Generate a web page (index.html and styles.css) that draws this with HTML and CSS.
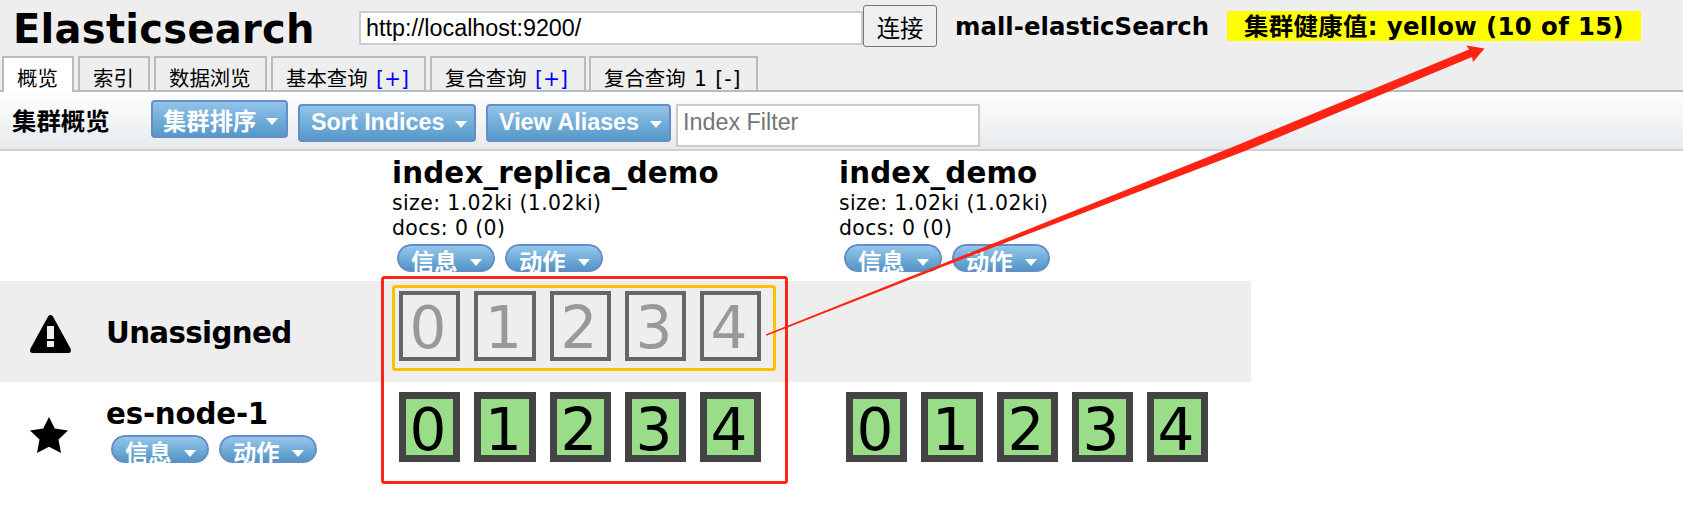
FILE: index.html
```html
<!DOCTYPE html>
<html lang="zh-CN">
<head>
<meta charset="utf-8">
<title>Elasticsearch</title>
<link rel="stylesheet" href="styles.css">
</head>
<body>
<header class="header">
  <div class="topline">
    <h1 class="brand">Elasticsearch</h1>
    <input class="url" type="text" value="http://localhost:9200/">
    <button class="connect">连接</button>
    <span class="cluster">mall-elasticSearch</span>
    <span class="health">集群健康值: yellow (10 of 15)</span>
  </div>
  <nav class="tabs">
    <div class="tab tab-short active">概览</div>
    <div class="tab tab-short">索引</div>
    <div class="tab tab-data">数据浏览</div>
    <div class="tab tab-query">基本查询 <a class="more">[+]</a></div>
    <div class="tab tab-multi">复合查询 <a class="more">[+]</a></div>
    <div class="tab tab-open">复合查询 <a class="page">1 [-]</a></div>
  </nav>
</header>
<section class="toolbar">
  <h2 class="toolbar-title">集群概览</h2>
  <button class="menu menu-cluster">集群排序<i class="caret"></i></button>
  <button class="menu menu-sort">Sort Indices<i class="caret"></i></button>
  <button class="menu menu-alias">View Aliases<i class="caret"></i></button>
  <input class="filter" type="text" placeholder="Index Filter">
</section>
<main class="grid">
  <div class="row heads">
    <div class="node"></div>
    <div class="col">
      <h3 class="name index-long">index_replica_demo</h3>
      <p class="stat">size: 1.02ki (1.02ki)</p>
      <p class="stat">docs: 0 (0)</p>
      <div class="pills"><button class="pill">信息<i class="caret"></i></button><button class="pill">动作<i class="caret"></i></button></div>
    </div>
    <div class="col">
      <h3 class="name index-long">index_demo</h3>
      <p class="stat">size: 1.02ki (1.02ki)</p>
      <p class="stat">docs: 0 (0)</p>
      <div class="pills"><button class="pill">信息<i class="caret"></i></button><button class="pill">动作<i class="caret"></i></button></div>
    </div>
  </div>
  <div class="row unassigned">
    <div class="node">
      <svg class="icon warn" viewBox="0 0 41 38"><path fill-rule="evenodd" d="M18.2 1.2Q20.5-1.2 22.8 1.2L40.5 33.5Q42 38 38.5 38H2.5Q-1 38 .5 33.5ZM17 11V24H24V11ZM17 26V32H24V26Z"/></svg>
      <h3 class="name">Unassigned</h3>
    </div>
    <div class="col shards">
      <b class="shard">0</b><b class="shard wide">1</b><b class="shard">2</b><b class="shard">3</b><b class="shard">4</b>
    </div>
  </div>
  <div class="row assigned">
    <div class="node">
      <svg class="icon star" viewBox="0 0 38 36"><path d="M19 0L24.8 11.4L38 13.5L28.5 22.5L31 36L19 29.8L7 36L9.5 22.5L0 13.5L13.2 11.4Z"/></svg>
      <div>
        <h3 class="name">es-node-1</h3>
        <div class="pills"><button class="pill">信息<i class="caret"></i></button><button class="pill">动作<i class="caret"></i></button></div>
      </div>
    </div>
    <div class="col shards">
      <b class="shard">0</b><b class="shard wide">1</b><b class="shard">2</b><b class="shard">3</b><b class="shard">4</b>
    </div>
    <div class="col shards">
      <b class="shard">0</b><b class="shard wide">1</b><b class="shard">2</b><b class="shard">3</b><b class="shard">4</b>
    </div>
  </div>
</main>
<svg class="notes" viewBox="0 0 1683 506">
  <rect class="note-red" x="382.5" y="277.5" width="404" height="205" rx="2"/>
  <rect class="note-gold" x="393.5" y="286.5" width="381" height="83" rx="2"/>
  <path class="arrow" d="M766 334.3L942 264L1240 144L1469 49.5L1466.5 45.5L1484.5 48.5L1473 62L1472 57L1245 151L942 267L766.5 335.8Z"/>
</svg>
</body>
</html>
```
FILE: styles.css
```css
* { box-sizing: border-box; }
body {
  margin: 0;
  height: 506px;
  overflow: hidden;
  position: relative;
  background: #fff;
  color: #000;
  font-family: "DejaVu Sans", "Noto Sans CJK SC", sans-serif;
}
h1, h2, h3, p { margin: 0; }
button, input { font-family: "Liberation Sans", "Noto Sans CJK SC", sans-serif; font-size: 23.33px; }
button { padding: 0; }

.header { height: 92px; background: #eee; border-bottom: 2px solid #bbb; }
.topline { display: flex; align-items: flex-start; height: 56px; padding-left: 13px; }
.brand { width: 346px; padding-top: 4px; font-size: 40px; line-height: 50px; letter-spacing: .28px; }
.url { width: 504px; height: 34px; margin-top: 11px; padding: 0 5px; border: 2px solid #ccc; background: #fff; }
.connect { width: 74px; height: 42px; margin-top: 5px; padding-top: 2px; border: 1px solid #767676; border-radius: 3px; background: #efefef; color: #000; }
.cluster, .health { font-size: 24.4px; font-weight: bold; line-height: 32px; margin-top: 11px; white-space: nowrap; }
.cluster { width: 272px; margin-left: 18px; letter-spacing: .04px; }
.health { width: 414px; height: 30px; padding-left: 17px; letter-spacing: .35px; background: #ff0; }

.tabs { display: flex; gap: 4px; height: 36px; padding-left: 2px; }
.tab { height: 34px; border: 2px solid #bbb; border-bottom: 0; padding: 5px 0 0 13px; font-size: 20.4px; line-height: 32px; white-space: nowrap; }
.tab-short { width: 72px; }
.tab-data { width: 113px; }
.tab-query { width: 155px; }
.tab-multi { width: 156px; }
.tab-open { width: 169px; margin-left: -1px; }
.active { height: 36px; background: #fff; }
.more { margin-left: 2px; color: #00f; }
.page { margin-left: 2px; letter-spacing: .9px; }

.toolbar { display: flex; align-items: flex-start; height: 59px; padding-left: 12px; border-bottom: 2px solid #cdd1d4; background: linear-gradient(#fdfefe, #e7eaed); }
.toolbar-title { width: 139px; padding-top: 12px; font-size: 24.4px; line-height: 36px; }
.menu { display: flex; align-items: center; justify-content: space-between; height: 38px; padding: 0 7px 2px 11px; border: 2px solid #668dc6; border-radius: 4px; background: linear-gradient(#96c6eb, #5296c7); background-origin: border-box; color: #fff; font-weight: bold; white-space: nowrap; }
.menu-cluster { width: 137px; margin: 8px 10px 0 0; padding: 2px 8px 0 10px; }
.menu-sort { width: 178px; margin: 12px 10px 0 0; }
.menu-alias { width: 185px; margin: 12px 5px 0 0; }
.caret { width: 0; height: 0; border: 6px solid transparent; border-top: 7px solid #fff; border-bottom: 0; margin-top: 2px; }
.menu-sort .caret, .menu-alias .caret { margin-top: 4px; }
.filter { width: 304px; height: 43px; margin-top: 12px; padding: 0 5px 6px; border: 2px solid #ccc; background: #fff; }
.filter::placeholder { color: #757575; }

.grid { width: 1251px; }
.row { display: flex; }
.node { display: flex; flex: none; width: 392px; padding-left: 30px; }
.col { flex: none; width: 447px; }
.name { font-size: 29.3px; line-height: 36px; white-space: nowrap; }
.heads { height: 130px; padding-top: 4px; }
.index-long { letter-spacing: .16px; }
.stat { font-size: 20.4px; line-height: 25px; letter-spacing: .4px; }
.heads .pills { margin-top: 3px; }
.pills { display: flex; gap: 10px; padding-left: 5px; }
.pill { display: flex; justify-content: space-between; width: 98px; height: 28px; padding: 3px 11px 0 12px; clip-path: inset(0 round 14px 14px 10px 10px); border: 2px solid #668dc6; border-radius: 14px; background: linear-gradient(#96c6eb, #5296c7); color: #fff; font-weight: bold; line-height: 28px; }
.pill .caret { margin-top: 10px; }
.unassigned { height: 101px; background: #eee; }
.icon { flex: none; }
.warn { width: 41px; height: 38px; margin: 34px 35px 0 0; }
.unassigned .name { padding-top: 34px; letter-spacing: -.65px; }
.star { width: 38px; height: 36px; margin: 35px 38px 0 0; }
.assigned .node .name { padding-top: 14px; letter-spacing: -.2px; }
.assigned .node .pills { margin-top: 3px; }
.shards { display: flex; gap: 14px; padding: 10px 0 0 7px; }
.shard { display: flex; align-items: center; justify-content: center; width: 61px; height: 70px; padding: 4px 3px 0 0; border: 4px solid #666; color: #999; font-size: 58px; font-weight: normal; line-height: 56px; }
.wide { width: 62px; }
.assigned .shard { padding-top: 5px; border: 7px solid #444; background: #9d8; color: #000; }

.notes { position: absolute; inset: 0; width: 1683px; height: 506px; pointer-events: none; }
.note-red, .note-gold { fill: none; stroke-width: 3; }
.note-red { stroke: #ff2313; }
.note-gold { stroke: #ffc000; }
.arrow { fill: #ff2313; }
```
